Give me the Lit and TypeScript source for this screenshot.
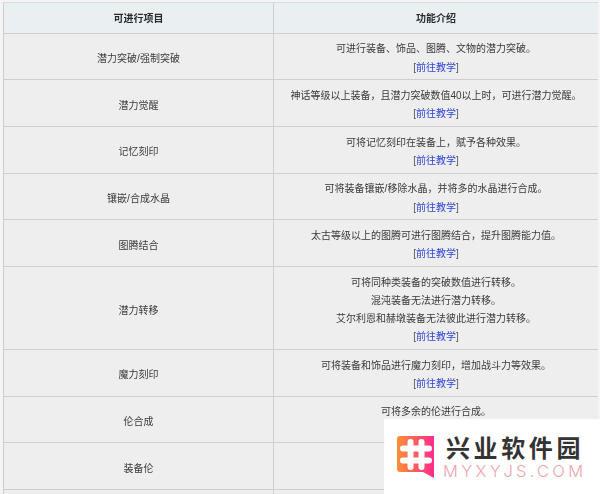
import { LitElement, html, css } from "lit";
import { customElement } from "lit/decorators.js";

type Row = { name: string; lines: string[]; link: boolean };

const rows: Row[] = [
  { name: "潜力突破/强制突破", lines: ["可进行装备、饰品、图腾、文物的潜力突破。"], link: true },
  { name: "潜力觉醒", lines: ["神话等级以上装备，且潜力突破数值40以上时，可进行潜力觉醒。"], link: true },
  { name: "记忆刻印", lines: ["可将记忆刻印在装备上，赋予各种效果。"], link: true },
  { name: "镶嵌/合成水晶", lines: ["可将装备镶嵌/移除水晶，并将多的水晶进行合成。"], link: true },
  { name: "图腾结合", lines: ["太古等级以上的图腾可进行图腾结合，提升图腾能力值。"], link: true },
  {
    name: "潜力转移",
    lines: ["可将同种类装备的突破数值进行转移。", "混沌装备无法进行潜力转移。", "艾尔利恩和赫墩装备无法彼此进行潜力转移。"],
    link: true,
  },
  { name: "魔力刻印", lines: ["可将装备和饰品进行魔力刻印，增加战斗力等效果。"], link: true },
  { name: "伦合成", lines: ["可将多余的伦进行合成。"], link: false },
  { name: "装备伦", lines: [""], link: false },
  { name: "", lines: [""], link: false },
];

@customElement("app-root")
export class AppRoot extends LitElement {
  static styles = css`
    :host {
      display: block;
      position: relative;
      width: 600px;
      height: 494px;
      overflow: hidden;
      background: #f4f4f4;
      font-family: "Liberation Sans", "Noto Sans CJK SC", sans-serif;
      font-size: 10px;
      line-height: 18.17px;
      color: #3a3a3a;
    }
    .table {
      display: grid;
      grid-template-columns: 270px 324px;
      margin: 2px 2px 0 3px;
      border-top: 1px solid #dcdcdc;
      border-left: 1px solid #cfcfcf;
      border-right: 1px solid #cfcfcf;
      filter: blur(0.25px);
    }
    .cell {
      display: flex;
      flex-direction: column;
      align-items: center;
      justify-content: flex-start;
      padding: 6.8px 6px 2.5px;
      height: 46.67px;
      box-sizing: border-box;
      background: #eeeeee;
      border-bottom: 1px solid #cfcfcf;
      text-align: center;
    }
    .cell.tall {
      height: 83px;
    }
    .cell.name {
      border-right: 1px solid #cfcfcf;
      justify-content: center;
      padding: 7.5px 6px 2px;
    }
    .cell.head {
      height: 30.7px;
      padding: 2px 0 0;
      background: #eaf0f1;
      font-weight: 700;
      color: #2a2a2a;
      justify-content: center;
    }
    .link {
      color: #555;
    }
    .link span {
      color: #2f45d8;
    }
    .mark {
      position: absolute;
      left: 384px;
      top: 419px;
      width: 216px;
      height: 75px;
      background: #fff;
      box-sizing: border-box;
      padding: 17px 0 0 13px;
      display: flex;
      gap: 11px;
      align-items: flex-start;
    }
    .mark svg {
      flex: none;
      display: block;
    }
    .brand {
      display: flex;
      flex-direction: column;
    }
    .cn {
      font-family: "Noto Sans CJK SC", sans-serif;
      font-weight: 700;
      font-size: 24px;
      line-height: 22px;
      letter-spacing: 3.6px;
      color: #333;
      white-space: nowrap;
    }
    .en {
      font-family: "Inter", sans-serif;
      font-weight: 300;
      font-size: 16.5px;
      line-height: 16px;
      letter-spacing: 3.3px;
      color: #f2a3ab;
      margin: 5px 0 0 -3px;
      white-space: nowrap;
    }
  `;

  render() {
    return html`
      <div class="table">
        <div class="cell name head">可进行项目</div>
        <div class="cell head">功能介绍</div>
        ${rows.map((r) => {
          const tall = r.lines.length > 2 ? "tall" : "";
          return html`
            <div class="cell name ${tall}">${r.name}</div>
            <div class="cell ${tall}">
              ${r.lines.map((l) => html`<div>${l}</div>`)}
              ${r.link ? html`<div class="link">[<span>前往教学</span>]</div>` : ""}
            </div>
          `;
        })}
      </div>
      <div class="mark">
        <svg width="38" height="44" viewBox="0 0 38 44" aria-hidden="true">
          <defs>
            <linearGradient id="g" x1="0" y1="0" x2="1" y2="0">
              <stop offset="0" stop-color="#ff8f35"></stop>
              <stop offset="1" stop-color="#ff2b8c"></stop>
            </linearGradient>
          </defs>
          <path d="M3 0H37V42L26 36H3a3 3 0 0 1-3-3V3a3 3 0 0 1 3-3Z" fill="url(#g)"></path>
          <path
            d="M13.5 6V31M24.5 6V31M6 12.5H32M6 24.5H32"
            stroke="#fff"
            stroke-width="6"
            stroke-linecap="round"
            fill="none"
          ></path>
        </svg>
        <div class="brand">
          <div class="cn">兴业软件园</div>
          <div class="en">MYXYJS.COM</div>
        </div>
      </div>
    `;
  }
}
